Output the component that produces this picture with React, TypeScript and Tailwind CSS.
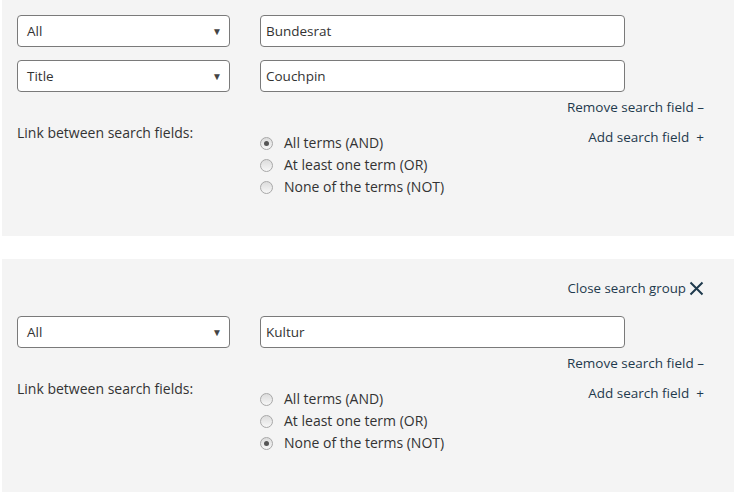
import React from 'react'

const font = { fontFamily: '"Open Sans", "Noto Sans", sans-serif' }

type Opt = { label: string; checked?: boolean }

const Radio = ({ label, checked }: Opt) => (
	<div className="flex h-[22px] items-center">
		<span className="flex h-[13px] w-[13px] items-center justify-center rounded-full border border-[#a8a8a8] bg-gradient-to-b from-[#dcdcdc] to-[#f7f7f7]">
			{checked ? <span className="h-[5px] w-[5px] rounded-full bg-[#555]" /> : null}
		</span>
		<span className="ml-[11px] text-[14px] text-[#333]">{label}</span>
	</div>
)

const SelectBox = ({ value }: { value: string }) => (
	<div className="flex h-[32px] w-[213px] items-center justify-between rounded-[4px] border border-[#7a7a7a] bg-white pl-[9px] pr-[7px] text-[13.5px] text-[#333]">
		<span>{value}</span>
		<span className="text-[10px] leading-none text-[#444]">▼</span>
	</div>
)

const TextBox = ({ value }: { value: string }) => (
	<div className="ml-[30px] flex h-[32px] w-[365px] items-center rounded-[4px] border border-[#7a7a7a] bg-white pl-[5px] text-[13.5px] text-[#333]">
		{value}
	</div>
)

const SearchGroup = ({
	rows,
	checked,
	closable,
}: {
	rows: [string, string][]
	checked: number
	closable?: boolean
}) => {
	const opts = ['All terms (AND)', 'At least one term (OR)', 'None of the terms (NOT)']
	return (
		<div
			className={`bg-[#f4f4f4] pl-[15px] pr-[30px] pb-[38px] ${closable ? 'pt-[20px]' : 'pt-[15px]'}`}
		>
			{closable ? (
				<div className="mb-[19px] flex h-[18px] items-center justify-end text-[13.3px] text-[#1f3a4d]">
					<span>Close search group</span>
					<svg className="ml-[3px]" width="15" height="15" viewBox="0 0 15 15">
						<path d="M1.5 1.5 L13.5 13.5 M13.5 1.5 L1.5 13.5" stroke="#1f3a4d" strokeWidth="2" fill="none" />
					</svg>
				</div>
			) : null}
			<div className="flex flex-col gap-[13px]">
				{rows.map(([s, t], i) => (
					<div key={i} className="flex">
						<SelectBox value={s} />
						<TextBox value={t} />
					</div>
				))}
			</div>
			<div className="mt-[6px] flex h-[18px] justify-end text-[13.5px] text-[#1f3a4d]">Remove search field –</div>
			<div className="mt-[8px] flex">
				<div className="w-[243px] text-[14px] text-[#333]">Link between search fields:</div>
				<div className="mt-[8px] flex flex-1 flex-col">
					{opts.map((o, i) => (
						<Radio key={o} label={o} checked={i === checked} />
					))}
				</div>
				<div className="mt-[4px] text-[13.5px] text-[#1f3a4d]">
					Add search field<span className="ml-[7px]">+</span>
				</div>
			</div>
		</div>
	)
}

export default function App() {
	return (
		<div className="min-h-[494px] bg-white pl-[2px] text-[13px] leading-[18px]" style={font}>
			<SearchGroup
				rows={[
					['All', 'Bundesrat'],
					['Title', 'Couchpin'],
				]}
				checked={0}
			/>
			<div className="mt-[23px]">
				<SearchGroup rows={[['All', 'Kultur']]} checked={2} closable />
			</div>
		</div>
	)
}
